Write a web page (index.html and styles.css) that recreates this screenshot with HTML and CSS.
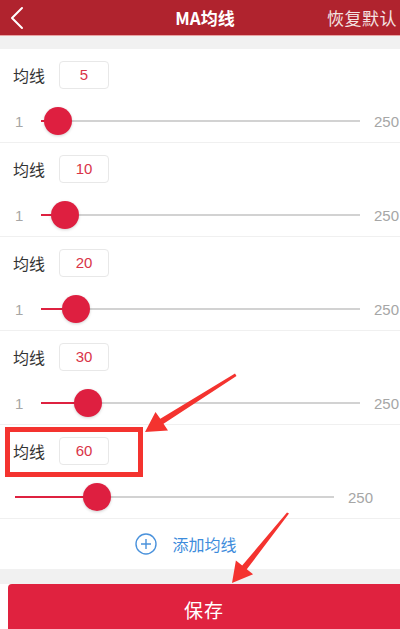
FILE: index.html
```html
<!DOCTYPE html>
<html lang="zh">
<head>
<meta charset="utf-8">
<title>MA均线</title>
<link rel="stylesheet" href="styles.css">
</head>
<body>
<div class="page">
  <header class="topbar">
    <svg class="back" width="14" height="24" viewBox="0 0 14 24"><path d="M12 2 L2 12 L12 22" fill="none" stroke="#fff" stroke-width="2" stroke-linecap="round" stroke-linejoin="round"/></svg>
    <div class="title">MA均线</div>
    <div class="reset">恢复默认</div>
  </header>
  <div class="band"></div>
  <div class="list">
    <div class="row">
      <div class="head"><span class="label">均线</span><span class="value">5</span></div>
      <div class="slider"><span class="min">1</span><div class="track"><div class="fill" style="width:17px"></div><div class="thumb" style="left:17px"></div></div><span class="max">250</span></div>
    </div>
    <div class="row">
      <div class="head"><span class="label">均线</span><span class="value">10</span></div>
      <div class="slider"><span class="min">1</span><div class="track"><div class="fill" style="width:24px"></div><div class="thumb" style="left:24px"></div></div><span class="max">250</span></div>
    </div>
    <div class="row">
      <div class="head"><span class="label">均线</span><span class="value">20</span></div>
      <div class="slider"><span class="min">1</span><div class="track"><div class="fill" style="width:35px"></div><div class="thumb" style="left:35px"></div></div><span class="max">250</span></div>
    </div>
    <div class="row">
      <div class="head"><span class="label">均线</span><span class="value">30</span></div>
      <div class="slider"><span class="min">1</span><div class="track"><div class="fill" style="width:47px"></div><div class="thumb" style="left:47px"></div></div><span class="max">250</span></div>
    </div>
    <div class="row">
      <div class="head"><span class="label">均线</span><span class="value">60</span></div>
      <div class="slider swiped"><div class="track"><div class="fill" style="width:82px"></div><div class="thumb" style="left:82px"></div></div><span class="max">250</span></div>
    </div>
    <div class="add">
      <svg class="plus" width="22" height="22" viewBox="0 0 22 22"><circle cx="11" cy="11" r="10" fill="none" stroke="#4a92dc" stroke-width="1.4"/><path d="M11 6 V16 M6 11 H16" stroke="#4a92dc" stroke-width="1.4"/></svg>
      <span class="add-text">添加均线</span>
    </div>
  </div>
  <div class="band2"></div>
  <button class="save">保存</button>

  <svg class="annot" width="400" height="629" viewBox="0 0 400 629">
    <rect x="7.5" y="429.5" width="133" height="45" fill="none" stroke="#f4332f" stroke-width="5"/>
    <polygon points="235,373.5 236.5,376 163.5,423.8 168,430.6 145,432 155.5,411.9 160.3,418.8" fill="#f4332f"/>
    <polygon points="287,512.5 289,513.5 246.8,569.3 253.1,574.3 232,583 235.9,560.5 242.2,565.5" fill="#f4332f"/>
  </svg>
</div>
</body>
</html>
```

FILE: styles.css
```css
* { box-sizing: border-box; }
html, body { margin: 0; padding: 0; }
body {
  width: 400px;
  height: 629px;
  overflow: hidden;
  background: #fff;
  font-family: "Noto Sans CJK SC", "Noto Sans", sans-serif;
}
.page { position: relative; width: 400px; height: 629px; overflow: hidden; }

.topbar {
  height: 36px;
  background: #b0232e;
  border-bottom: 1px solid #e8a3a3;
  display: flex;
  align-items: center;
  position: relative;
  color: #fff;
}
.back { margin-left: 10px; }
.title {
  position: absolute;
  left: 0; right: 0;
  text-align: center;
  padding-left: 10px;
  font-size: 17px;
  font-weight: 700;
  line-height: 36px;
  pointer-events: none;
}
.reset {
  margin-left: auto;
  margin-right: 3px;
  font-size: 17px;
  color: #f4e3e3;
  letter-spacing: 0.5px;
}
.band { height: 13px; background: #f1f1f1; }

.row {
  height: 94px;
  border-bottom: 1px solid #f0f0f0;
  padding-top: 12px;
}
.head {
  display: flex;
  align-items: center;
  height: 28px;
  padding-left: 13px;
}
.label { font-size: 16px; color: #333; width: 46px; }
.value {
  width: 50px;
  height: 28px;
  border: 1px solid #e8e8e8;
  border-radius: 4px;
  text-align: center;
  line-height: 26px;
  font-size: 15px;
  color: #d93448;
  font-family: "Liberation Sans", "Noto Sans CJK SC", sans-serif;
}
.slider {
  display: flex;
  align-items: center;
  height: 28px;
  margin-top: 18px;
  padding-left: 15px;
  font-family: "Liberation Sans", sans-serif;
  font-size: 15px;
  color: #a6a6a6;
}
.slider.swiped { padding-left: 15px; padding-right: 26px; }
.min { width: 26px; }
.track {
  position: relative;
  flex: 1;
  height: 2px;
  background: #d2d2d2;
}
.fill {
  position: absolute;
  left: 0; top: 0;
  height: 2px;
  background: #de2140;
}
.thumb {
  position: absolute;
  top: -13px;
  width: 28px;
  height: 28px;
  margin-left: -14px;
  border-radius: 50%;
  background: #de1f40;
  box-shadow: 0 1px 3px rgba(0,0,0,0.18);
}
.max { margin-left: 14px; width: 26px; }

.add {
  height: 50px;
  display: flex;
  align-items: center;
  justify-content: center;
  padding-right: 28px;
  gap: 15px;
}
.add-text { font-size: 16px; color: #3d8cdc; }
.band2 { height: 15px; background: #f1f1f1; }
.save {
  display: block;
  margin-left: 8px;
  width: 392px;
  height: 50px;
  border: none;
  border-radius: 4px 0 0 0;
  background: #e0223f;
  color: #fff;
  font-family: "Noto Sans CJK SC", sans-serif;
  font-size: 19px;
  letter-spacing: 1px;
  padding: 0;
}
.annot { position: absolute; left: 0; top: 0; pointer-events: none; }
```
